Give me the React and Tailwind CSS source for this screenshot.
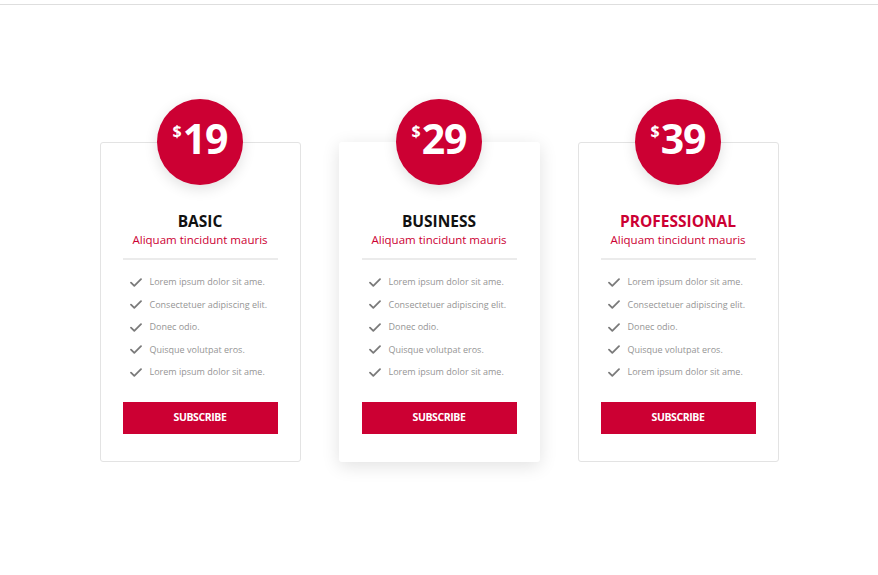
const plans = [
  { price: "19", name: "BASIC", featured: false, highlight: false },
  { price: "29", name: "BUSINESS", featured: true, highlight: false },
  { price: "39", name: "PROFESSIONAL", featured: false, highlight: true },
];

const features = [
  "Lorem ipsum dolor sit ame.",
  "Consectetuer adipiscing elit.",
  "Donec odio.",
  "Quisque volutpat eros.",
  "Lorem ipsum dolor sit ame.",
];

function Check() {
  return (
    <svg width="12" height="9" viewBox="0 0 12 9" fill="none">
      <path d="M1 4.6 L4.3 7.8 L11 1.2" stroke="#7a7a7a" strokeWidth="1.8" strokeLinecap="round" strokeLinejoin="round" />
    </svg>
  );
}

function PlanCard({ plan }) {
  return (
    <div
      className={
        "flex w-[201px] h-[320px] flex-col items-center rounded-[3px] border bg-white " +
        (plan.featured
          ? "border-transparent shadow-[0_4px_18px_rgba(0,0,0,0.12)]"
          : "border-[#e3e3e3]")
      }
    >
      <div className="-mt-[44px] flex h-[86px] w-[86px] items-start justify-center rounded-full bg-[#cc0033] pt-[19px] text-white shadow-[0_4px_14px_rgba(0,0,0,0.12)]">
        <span className="mt-[5px] mr-[1px] text-[16px] font-bold leading-none">$</span>
        <span className="text-[41px] font-bold leading-none tracking-[-1px]">{plan.price}</span>
      </div>
      <div
        className={
          "mt-[26px] text-[15.5px] font-bold leading-[20px] " +
          (plan.highlight ? "text-[#cc0033]" : "text-[#111]")
        }
      >
        {plan.name}
      </div>
      <div className="text-[11.5px] leading-[18px] text-[#cc0033]">Aliquam tincidunt mauris</div>
      <div className="mt-[9px] h-[2px] w-[155px] bg-[#ebebeb]" />
      <ul className="mt-[15px] flex w-[155px] flex-col gap-[8.5px] pl-[7px]">
        {features.map((f, i) => (
          <li key={i} className="flex items-center gap-[8px] whitespace-nowrap text-[9px] leading-[14px] text-[#959595]">
            <Check />
            <span>{f}</span>
          </li>
        ))}
      </ul>
      <button className="mt-[23px] h-[32px] w-[155px] bg-[#cc0033] text-[10.5px] font-bold tracking-[-0.4px] text-white">
        SUBSCRIBE
      </button>
    </div>
  );
}

export default function App() {
  return (
    <div className="h-[575px] w-[878px] bg-white" style={{ fontFamily: '"Open Sans", sans-serif' }}>
      <div className="pt-[4px]">
        <div className="h-px w-full bg-[#dedede]" />
      </div>
      <div className="mt-[137px] flex justify-center gap-[38px]">
        {plans.map((p) => (
          <PlanCard key={p.name} plan={p} />
        ))}
      </div>
    </div>
  );
}
